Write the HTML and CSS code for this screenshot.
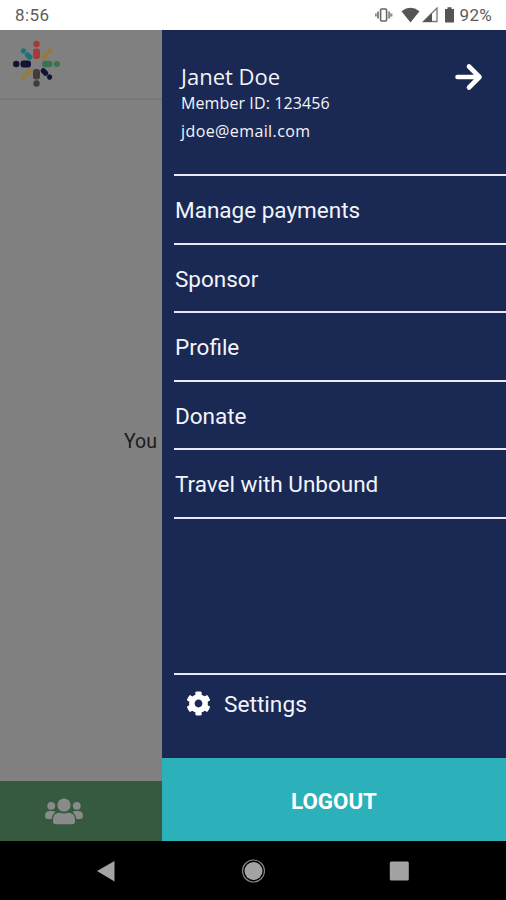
FILE: index.html
```html
<!DOCTYPE html>
<html lang="en">
  <head>
    <meta charset="UTF-8">
    <meta name="viewport" content="width=device-width, initial-scale=1.0">
    <title>Unbound</title>
    <link rel="stylesheet" href="styles.css">
  </head>
  <body>
    <div class="status-bar">
        <span class="clock">8:56</span>
        <svg class="status-icons" width="84" height="20" viewBox="0 0 84 20">
            <rect x="5.6" y="4" width="6" height="12" rx="1" fill="none" stroke="#666" stroke-width="1.6"/>
            <path d="M3 6.500v7M14.200 6.500v7M.8 8.500v3M16.400 8.500v3" fill="none" stroke="#888" stroke-width="2"/>
            <path d="M26.500 6.200Q35.500-.6 44.500 6.200L35.500 17.500z" fill="#555"/>
            <path d="M48.500 16.500L62 3v13.500z" fill="#fff" stroke="#777" stroke-width="1.300"/>
            <path d="M48 17l9-9v9z" fill="#555"/>
            <path d="M70 4h2.500V2.300h4V4H79v13.500h-9z" fill="#555"/>
        </svg>
        <span class="battery">92%</span>
    </div>

    <div class="screen">
        <div class="page">
            <header class="page-header">
                <svg class="logo" width="48" height="48" viewBox="-24 -24 48 48">
                    <g fill="#a33b3b"><circle cy="-20" r="3.200"/><rect x="-3.500" y="-15.500" width="7" height="10.500" rx="3"/></g>
                    <g fill="#39734f"><circle cx="20.300" r="3"/><rect x="5.500" y="-3.300" width="10.500" height="6.600" rx="3"/></g>
                    <g fill="#443a38"><circle cy="19.500" r="3.200"/><rect x="-3.500" y="5" width="7" height="10.500" rx="3"/></g>
                    <g fill="#101333"><circle cx="-20.300" r="3.200"/><rect x="-16" y="-3.500" width="10.500" height="7" rx="3"/></g>
                    <g fill="#997a33" transform="rotate(45)"><circle cy="-18.500" r="2.400"/><rect x="-2.200" y="-15.500" width="4.400" height="8" rx="2"/></g>
                    <g fill="#101333" transform="rotate(135)"><circle cy="-18.500" r="2.600"/><rect x="-2.600" y="-15.500" width="5.200" height="8.500" rx="2.300"/></g>
                    <g fill="#997a33" transform="rotate(225)"><circle cy="-18.500" r="2.300"/><rect x="-2.200" y="-15.500" width="4.400" height="8" rx="2"/></g>
                    <g fill="#1b7378" transform="rotate(315)"><circle cy="-18.500" r="2.600"/><rect x="-2.600" y="-15.500" width="5.200" height="8.500" rx="2.300"/></g>
                </svg>
            </header>
            <main class="page-body">You</main>
            <div class="tab-bar">
                <svg class="users" width="38" height="27" viewBox="0 0 38 27" fill="#8a8a8a">
                    <circle cx="6.200" cy="7.800" r="3.900"/>
                    <circle cx="31.800" cy="7.800" r="3.900"/>
                    <path d="M0 18q0-5 5-5h2.500q1.800 0 3 1.100Q7.200 16.500 6.700 21H3Q0 21 0 18zM38 18q0-5-5-5h-2.500q-1.800 0-3 1.100 3.300 2.400 3.800 6.900H35q3 0 3-3z"/>
                    <circle cx="19" cy="7" r="6.600"/>
                    <path d="M8 23.500V22q0-7.200 7-7.200 4 1.600 8 0 7 0 7 7.200v1.500q0 2.800-2.800 2.800H10.800Q8 26.300 8 23.500z"/>
                </svg>
            </div>
        </div>

        <div class="drawer">
            <div class="member">
                <div>
                    <div class="member-name">Janet Doe</div>
                    <div class="member-id">Member ID: 123456</div>
                    <div class="member-email">jdoe@email.com</div>
                </div>
                <svg class="arrow" width="30" height="28" viewBox="0 0 30 28" fill="none" stroke="#fff" stroke-width="4.600" stroke-linecap="round" stroke-linejoin="round">
                    <path d="M3.500 14h20M15 3.500L25.500 14 15 24.500"/>
                </svg>
            </div>
            <nav class="menu">
                <a class="menu-item">Manage payments</a>
                <a class="menu-item">Sponsor</a>
                <a class="menu-item">Profile</a>
                <a class="menu-item">Donate</a>
                <a class="menu-item">Travel with Unbound</a>
            </nav>
            <a class="settings">
                <svg width="25" height="25" viewBox="0 0 512 512" fill="#fff">
                    <path d="M487.400 315.700l-42.600-24.600c4.300-23.200 4.300-47 0-70.200l42.600-24.600c4.900-2.800 7.100-8.600 5.500-14-11.100-35.600-30-67.800-54.700-94.600-3.800-4.100-10-5.100-14.800-2.300L380.800 110c-17.900-15.400-38.500-27.300-60.800-35.100V25.800c0-5.600-3.900-10.500-9.400-11.700-36.700-8.200-74.300-7.800-109.200 0-5.500 1.200-9.400 6.100-9.400 11.700V75c-22.200 7.900-42.800 19.800-60.800 35.100L88.700 85.500c-4.900-2.800-11-1.900-14.800 2.300-24.700 26.700-43.600 58.900-54.700 94.600-1.700 5.400.6 11.200 5.500 14L67.300 221c-4.300 23.200-4.300 47 0 70.200l-42.600 24.600c-4.900 2.800-7.100 8.600-5.500 14 11.100 35.600 30 67.800 54.700 94.600 3.800 4.100 10 5.100 14.800 2.300l42.600-24.600c17.900 15.400 38.500 27.300 60.800 35.100v49.200c0 5.600 3.900 10.500 9.400 11.700 36.700 8.200 74.300 7.800 109.200 0 5.500-1.200 9.400-6.100 9.400-11.700v-49.200c22.200-7.900 42.800-19.800 60.800-35.100l42.600 24.600c4.900 2.800 11 1.900 14.800-2.300 24.700-26.700 43.600-58.900 54.700-94.600 1.500-5.500-.7-11.300-5.600-14.100zM256 336c-44.100 0-80-35.900-80-80s35.900-80 80-80 80 35.900 80 80-35.900 80-80 80z"/>
                </svg>
                <span>Settings</span>
            </a>
            <a class="logout">LOGOUT</a>
        </div>
    </div>

    <div class="system-nav">
        <svg width="24" height="24" viewBox="0 0 24 24"><path d="M2 12L19.500 2v20.500z" fill="#a3a3a3"/></svg>
        <svg width="24" height="24" viewBox="0 0 24 24"><circle cx="12.500" cy="12" r="9" fill="#a3a3a3"/><circle cx="12.500" cy="12" r="11" fill="none" stroke="#858585" stroke-width="1.200"/></svg>
        <svg width="24" height="24" viewBox="0 0 24 24"><rect x="2.800" y="2.500" width="19" height="19" rx="1.500" fill="#a3a3a3"/></svg>
    </div>
  </body>
</html>
```

FILE: styles.css
```css
:root {
    --navy: #1a2954;
    --teal: #2cb0b9;
    --dimmed: #808080;
    --tab-green: #365a40;
    --line: #e9e9f6;
}

body {
    margin: 0;
    height: 900px;
    display: flex;
    flex-direction: column;
    overflow: hidden;
    font-family: Roboto, sans-serif;
    background: #000;
}

.status-bar {
    height: 30px;
    box-sizing: border-box;
    padding: 0 14px 0 15px;
    display: flex;
    align-items: center;
    background: #fff;
    color: #5c5c5c;
    font-size: 17px;
}

.clock {
    letter-spacing: 0.4px;
}

.status-icons {
    margin-left: auto;
    margin-right: 1px;
}

.battery {
    font-size: 17px;
    letter-spacing: 0.3px;
}

.screen {
    position: relative;
    height: 811px;
}

.page {
    height: 100%;
    display: flex;
    flex-direction: column;
    background: var(--dimmed);
}

.page-header {
    height: 68px;
    border-bottom: 2px solid #787878;
}

.logo {
    display: block;
    padding: 10px 0 0 12.5px;
}

.page-body {
    flex: 1;
    display: flex;
    align-items: center;
    padding: 1px 0 0 124px;
    font-size: 19.5px;
    color: #1c1c1c;
}

.tab-bar {
    height: 60px;
    background: var(--tab-green);
}

.users {
    display: block;
    padding: 17px 0 0 45px;
}

.drawer {
    position: absolute;
    top: 0;
    right: 0;
    bottom: 0;
    width: 344px;
    display: flex;
    flex-direction: column;
    background: var(--navy);
    color: #f3f4fa;
}

.member {
    height: 146px;
    box-sizing: border-box;
    margin-left: 12px;
    padding: 32px 22px 0 7px;
    display: flex;
    justify-content: space-between;
    align-items: flex-start;
    border-bottom: 2px solid var(--line);
    font-family: "Open Sans", "Noto Sans", sans-serif;
}

.member-name {
    font-size: 22px;
    line-height: 28px;
}

.member-id,
.member-email {
    font-size: 16px;
    font-weight: 500;
    letter-spacing: 0.1px;
    line-height: 26px;
}

.member-email {
    line-height: 30px;
    letter-spacing: 0.4px;
}

.arrow {
    margin-top: 1px;
}

.menu-item {
    height: 68.6px;
    box-sizing: border-box;
    margin-left: 12px;
    padding: 1.6px 0 0 1px;
    display: flex;
    align-items: center;
    border-bottom: 2px solid var(--line);
    font-size: 22.5px;
}

.settings {
    height: 85px;
    box-sizing: border-box;
    margin: auto 0 0 12px;
    padding: 16px 0 0 12px;
    display: flex;
    align-items: flex-start;
    gap: 13px;
    border-top: 2px solid var(--line);
    font-size: 22.7px;
    line-height: 27px;
}

.logout {
    height: 83px;
    box-sizing: border-box;
    padding-top: 3px;
    display: flex;
    align-items: center;
    justify-content: center;
    background: var(--teal);
    color: #fff;
    font-size: 22.3px;
    font-weight: 700;
}

.system-nav {
    height: 59px;
    display: flex;
    align-items: center;
    justify-content: center;
    gap: 122px;
}
```
